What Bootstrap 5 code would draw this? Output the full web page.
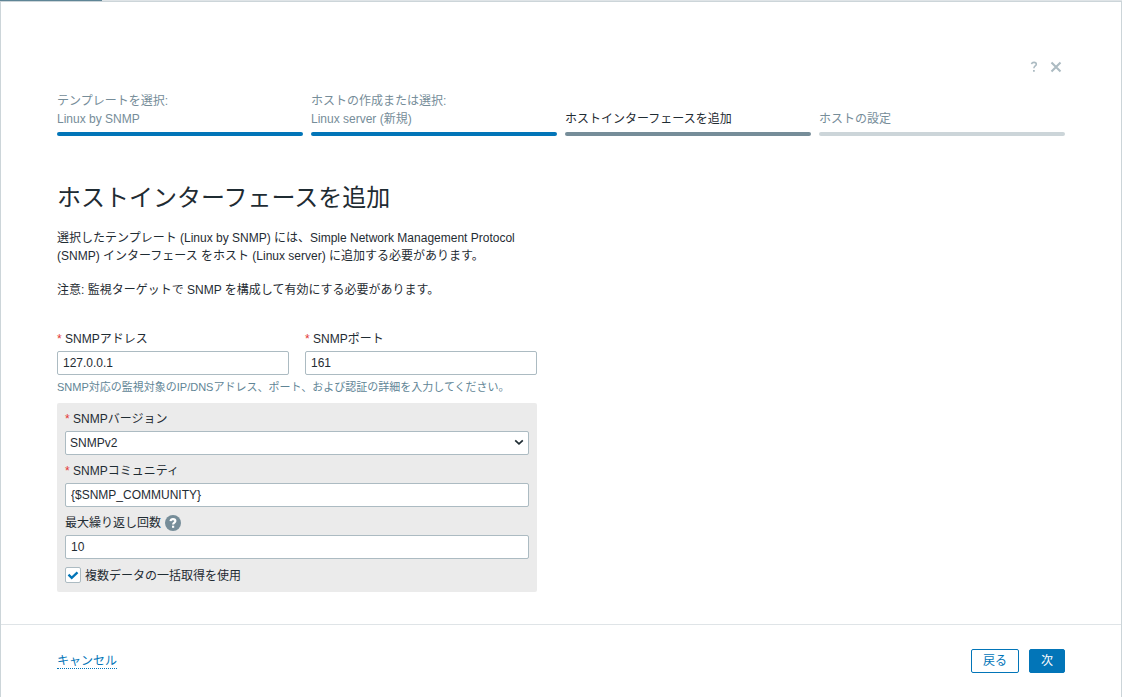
<!DOCTYPE html>
<html lang="ja">
<head>
<meta charset="utf-8">
<meta name="viewport" content="width=device-width, initial-scale=1">
<title>ホストウィザード</title>
<link href="https://cdn.jsdelivr.net/npm/bootstrap@5.3.0/dist/css/bootstrap.min.css" rel="stylesheet">
<style>
body{font-family:"Liberation Sans","Noto Sans CJK JP",sans-serif;font-size:12px;line-height:18px;color:#1f2c33;height:100vh;overflow:hidden}
.page-strip{height:1px;background:#dfe4e7}
.page-strip div{width:102px;height:1px;background:#5f8596}
.wizard{border:1px solid #ccd5d9;border-bottom:0;min-height:0}
.wizard-head{height:90px;padding:56px 54px 0}
.icon-btn{width:22px;height:18px;padding:0;border:0;background:none;color:#acbbc2}
.icon-btn svg{display:block;margin:auto}
.steps{display:grid;grid-template-columns:repeat(4,1fr);gap:8px;padding:0 56px;height:44px;color:#768d99}
.step{padding-bottom:4px}
.step::after{content:"";height:4px;margin-top:4px;border-radius:2px;background:#ccd5d9}
.step.done::after{background:#0275b8}
.step.current{color:#1f2c33}
.step.current::after{background:#768d99}
.wizard-body{padding:50px 56px 0;height:488px}
.form-area{width:480px}
h1{font-size:24px;line-height:24px;font-weight:400;margin:0 0 19px}
.form-area p{margin:0 0 16px}
.addr{margin-top:31px}
.form-label{display:flex;align-items:center;height:18px;margin:0 0 3px;white-space:pre}
.req::before{content:"* ";color:#e33734}
.form-control,.form-select{height:24px;min-height:0;padding:0 5px;font-size:12px;line-height:22px;border:1px solid #acbbc2;border-radius:2px;color:#1f2c33}
.form-select{padding:0 4px;background-image:url("data:image/svg+xml,%3Csvg xmlns='http://www.w3.org/2000/svg' viewBox='0 0 10 8'%3E%3Cpath d='M1.2 1.3l3.8 3.6 3.8-3.6' fill='none' stroke='%231f2c33' stroke-width='1.7'/%3E%3C/svg%3E");background-size:10px 8px;background-position:right 4px center}
.hint{font-size:11px;line-height:16px;color:#5f8596;margin-top:4px}
.panel{background:#ebebeb;border-radius:2px;padding:7px 8px 8px;margin-top:8px;height:189px}
.field{margin-bottom:7px}
.form-check-input{width:16px;height:16px;margin:0;border:1px solid #acbbc2;border-radius:2px!important}
.form-check-input:checked{background-color:#fff;border-color:#acbbc2;background-image:url("data:image/svg+xml,%3Csvg xmlns='http://www.w3.org/2000/svg' viewBox='0 0 14 14'%3E%3Cpath d='M2.5 6.7l3.2 3.1 5.8-5.5' fill='none' stroke='%230275b8' stroke-width='2.3'/%3E%3C/svg%3E")}
.bulk-row{margin-top:7px}
.bulk-row label{padding-top:1px;height:18px}
.wizard-foot{border-top:1px solid #dfe4e7;padding:24px 56px 0}
.cancel{color:#0275b8;text-decoration:none;border-bottom:1px dotted #0275b8;line-height:14px;height:16px;padding-top:1px;margin-top:4px}
.back-next{gap:10px}
.btn{height:24px;padding:0 11px;font-size:12px;line-height:22px;border-radius:2px;border-color:#0275b8}
.btn-outline-primary{color:#0275b8}
.btn-primary{background:#0275b8}
</style>
</head>
<body class="d-flex flex-column">
<div class="page-strip"><div></div></div>
<main class="wizard flex-grow-1 d-flex flex-column">
  <header class="wizard-head d-flex justify-content-end align-items-start">
    <button class="icon-btn" type="button" aria-label="ヘルプ"><svg width="8" height="12" viewBox="0 0 8 12"><path d="M1.5 3.1C1.8 1.9 2.7 1.4 4 1.4c1.5 0 2.3.8 2.3 1.8 0 1.8-2.4 1.8-2.4 4.1" fill="none" stroke="currentColor" stroke-width="1.6"/><path d="M3 9h1.8v1.8H3z" fill="currentColor"/></svg></button>
    <button class="icon-btn" type="button" aria-label="閉じる"><svg width="12" height="12" viewBox="0 0 12 12"><path d="M1.5 1.5l9 9M10.5 1.5l-9 9" stroke="currentColor" stroke-width="2.1"/></svg></button>
  </header>
  <nav class="steps">
    <div class="step done d-flex flex-column justify-content-end"><span>テンプレートを選択:</span><span>Linux by SNMP</span></div>
    <div class="step done d-flex flex-column justify-content-end"><span>ホストの作成または選択:</span><span>Linux server (新規)</span></div>
    <div class="step current d-flex flex-column justify-content-end"><span>ホストインターフェースを追加</span></div>
    <div class="step d-flex flex-column justify-content-end"><span>ホストの設定</span></div>
  </nav>
  <section class="wizard-body">
    <div class="form-area">
      <h1>ホストインターフェースを追加</h1>
      <p>選択したテンプレート (Linux by SNMP) には、Simple Network Management Protocol (SNMP) インターフェース をホスト (Linux server) に追加する必要があります。</p>
      <p>注意: 監視ターゲットで SNMP を構成して有効にする必要があります。</p>
      <div class="d-flex gap-3 addr">
        <div class="flex-fill"><label class="form-label req" for="addr">SNMPアドレス</label><input class="form-control" id="addr" value="127.0.0.1"></div>
        <div class="flex-fill"><label class="form-label req" for="port">SNMPポート</label><input class="form-control" id="port" value="161"></div>
      </div>
      <div class="hint">SNMP対応の監視対象のIP/DNSアドレス、ポート、および認証の詳細を入力してください。</div>
      <div class="panel">
        <div class="field"><label class="form-label req" for="ver">SNMPバージョン</label><select class="form-select" id="ver"><option>SNMPv2</option></select></div>
        <div class="field"><label class="form-label req" for="com">SNMPコミュニティ</label><input class="form-control" id="com" value="{$SNMP_COMMUNITY}"></div>
        <div class="field"><label class="form-label" for="rep">最大繰り返し回数<svg class="ms-1" width="16" height="16" viewBox="0 0 16 16"><circle cx="8" cy="8" r="8" fill="#768d99"/><path d="M5.5 6.2C5.7 4.8 6.6 4.1 8 4.1c1.5 0 2.4.8 2.4 1.9 0 1.6-2.3 1.7-2.3 3.6" fill="none" stroke="#fff" stroke-width="2.1"/><path d="M7 10.7h2.2v2.1H7z" fill="#fff"/></svg></label><input class="form-control" id="rep" value="10"></div>
        <div class="bulk-row d-flex align-items-center gap-1"><input class="form-check-input" type="checkbox" id="bulk" checked><label for="bulk">複数データの一括取得を使用</label></div>
      </div>
    </div>
  </section>
  <footer class="wizard-foot d-flex justify-content-between align-items-start flex-grow-1">
    <a class="cancel" href="#">キャンセル</a>
    <div class="d-flex back-next"><button class="btn btn-outline-primary" type="button">戻る</button><button class="btn btn-primary" type="button">次</button></div>
  </footer>
</main>
<script src="https://cdn.jsdelivr.net/npm/bootstrap@5.3.0/dist/js/bootstrap.bundle.min.js"></script>
</body>
</html>
